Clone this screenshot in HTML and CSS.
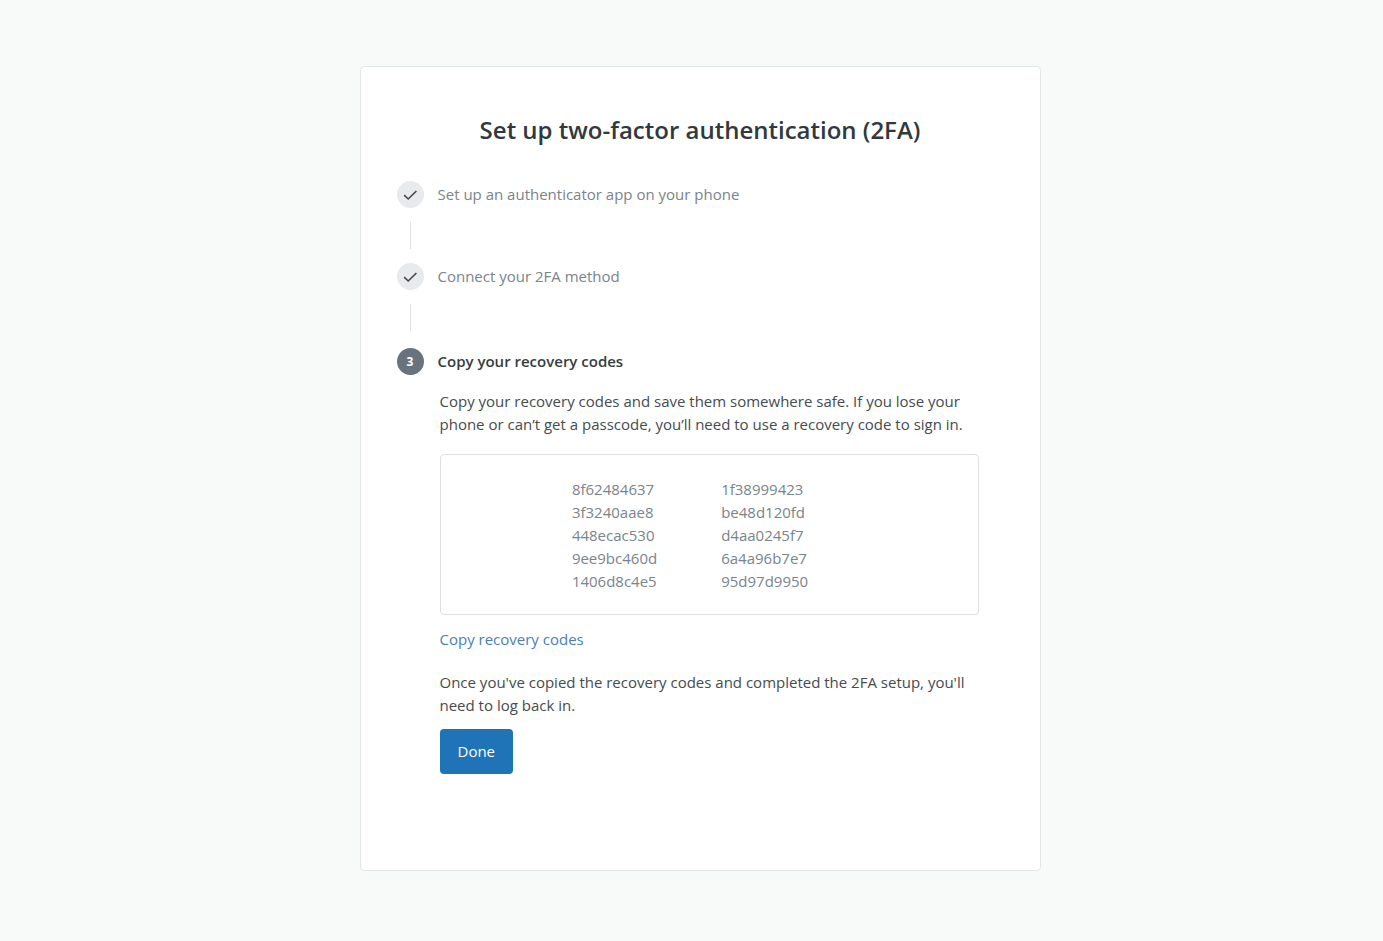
FILE: index.html
```html
<!DOCTYPE html>
<html lang="en">
<head>
<meta charset="utf-8">
<meta name="viewport" content="width=device-width, initial-scale=1">
<title>Set up two-factor authentication</title>
<link rel="stylesheet" href="styles.css">
</head>
<body>
<main class="card">
  <h1 class="title">Set up two-factor authentication (2FA)</h1>
  <ol class="steps">
    <li class="step step-done">
      <div class="step-head">
        <span class="badge"><svg class="check" viewBox="0 0 16 16" aria-hidden="true"><path d="M2.2 8.2 6.2 12 14.4 4"/></svg></span>
        <span class="step-name">Set up an authenticator app on your phone</span>
      </div>
    </li>
    <li class="step step-done">
      <div class="step-head">
        <span class="badge"><svg class="check" viewBox="0 0 16 16" aria-hidden="true"><path d="M2.2 8.2 6.2 12 14.4 4"/></svg></span>
        <span class="step-name">Connect your 2FA method</span>
      </div>
    </li>
    <li class="step step-current">
      <div class="step-head">
        <span class="badge">3</span>
        <h2 class="step-name">Copy your recovery codes</h2>
      </div>
      <div class="step-body">
        <p class="text">Copy your recovery codes and save them somewhere safe. If you lose your phone or can’t get a passcode, you’ll need to use a recovery code to sign in.</p>
        <div class="codes">
          <ul class="code-list">
            <li>8f62484637</li><li>3f3240aae8</li><li>448ecac530</li><li>9ee9bc460d</li><li>1406d8c4e5</li>
          </ul>
          <ul class="code-list">
            <li>1f38999423</li><li>be48d120fd</li><li>d4aa0245f7</li><li>6a4a96b7e7</li><li>95d97d9950</li>
          </ul>
        </div>
        <a class="copy" href="#">Copy recovery codes</a>
        <p class="text">Once you've copied the recovery codes and completed the 2FA setup, you'll need to log back in.</p>
        <button class="done" type="button">Done</button>
      </div>
    </li>
  </ol>
</main>
</body>
</html>
```
FILE: styles.css
```css
* { box-sizing: border-box; }

body {
  margin: 0;
  min-height: 100vh;
  padding: 66px 0 70px 17px;
  background: #f8faf9;
  color: #454b4e;
  font: 15px/23px "Segoe UI", "Open Sans", "Noto Sans", sans-serif;
}

.card {
  width: 100%;
  max-width: 681px;
  margin: 0 auto;
  padding: 47px 61px 96px 36px;
  background: #fff;
  border: 1px solid #e3e6e6;
  border-radius: 4px;
}

.title {
  margin: 0 -25px 35px 0;
  text-align: center;
  font-size: 24px;
  line-height: 32px;
  font-weight: 600;
  color: #30393d;
}

.steps, .code-list { margin: 0; padding: 0; list-style: none; }

.step-head { display: flex; align-items: center; gap: 14px; }

.badge {
  display: flex;
  align-items: center;
  justify-content: center;
  flex: none;
  width: 27px;
  height: 27px;
  border-radius: 50%;
  background: #e9eaec;
}

.check {
  width: 16px;
  height: 16px;
  fill: none;
  stroke: #40474d;
  stroke-width: 1.6;
}

.step-done { color: #7a848b; }

.step-done::after {
  content: "";
  display: block;
  width: 1px;
  height: 27px;
  margin: 14px 13px;
  background: #dfe2e4;
}

.step-current { padding-top: 3px; }

.step-current .badge {
  background: #68737d;
  color: #fff;
  font-size: 12px;
  font-weight: 700;
}

.step-current .step-name {
  margin: 0;
  font-size: 15px;
  font-weight: 600;
  color: #363d40;
}

.step-body {
  display: flex;
  flex-direction: column;
  align-items: flex-start;
  margin: 15px 0 0 43px;
}

.text { margin: 0; }

.codes {
  display: flex;
  justify-content: center;
  gap: 64px;
  width: 100%;
  margin: 18px 0 13px;
  padding: 23px 38px 21px 0;
  border: 1px solid #dddfe2;
  border-radius: 4px;
  color: #7a848b;
}

.copy {
  margin-bottom: 20px;
  color: #4a7fb5;
  text-decoration: none;
}

.done {
  margin-top: 12px;
  padding: 11px 18px;
  border: 0;
  border-radius: 4px;
  background: #1f73b7;
  color: #fff;
  font: inherit;
}
```
